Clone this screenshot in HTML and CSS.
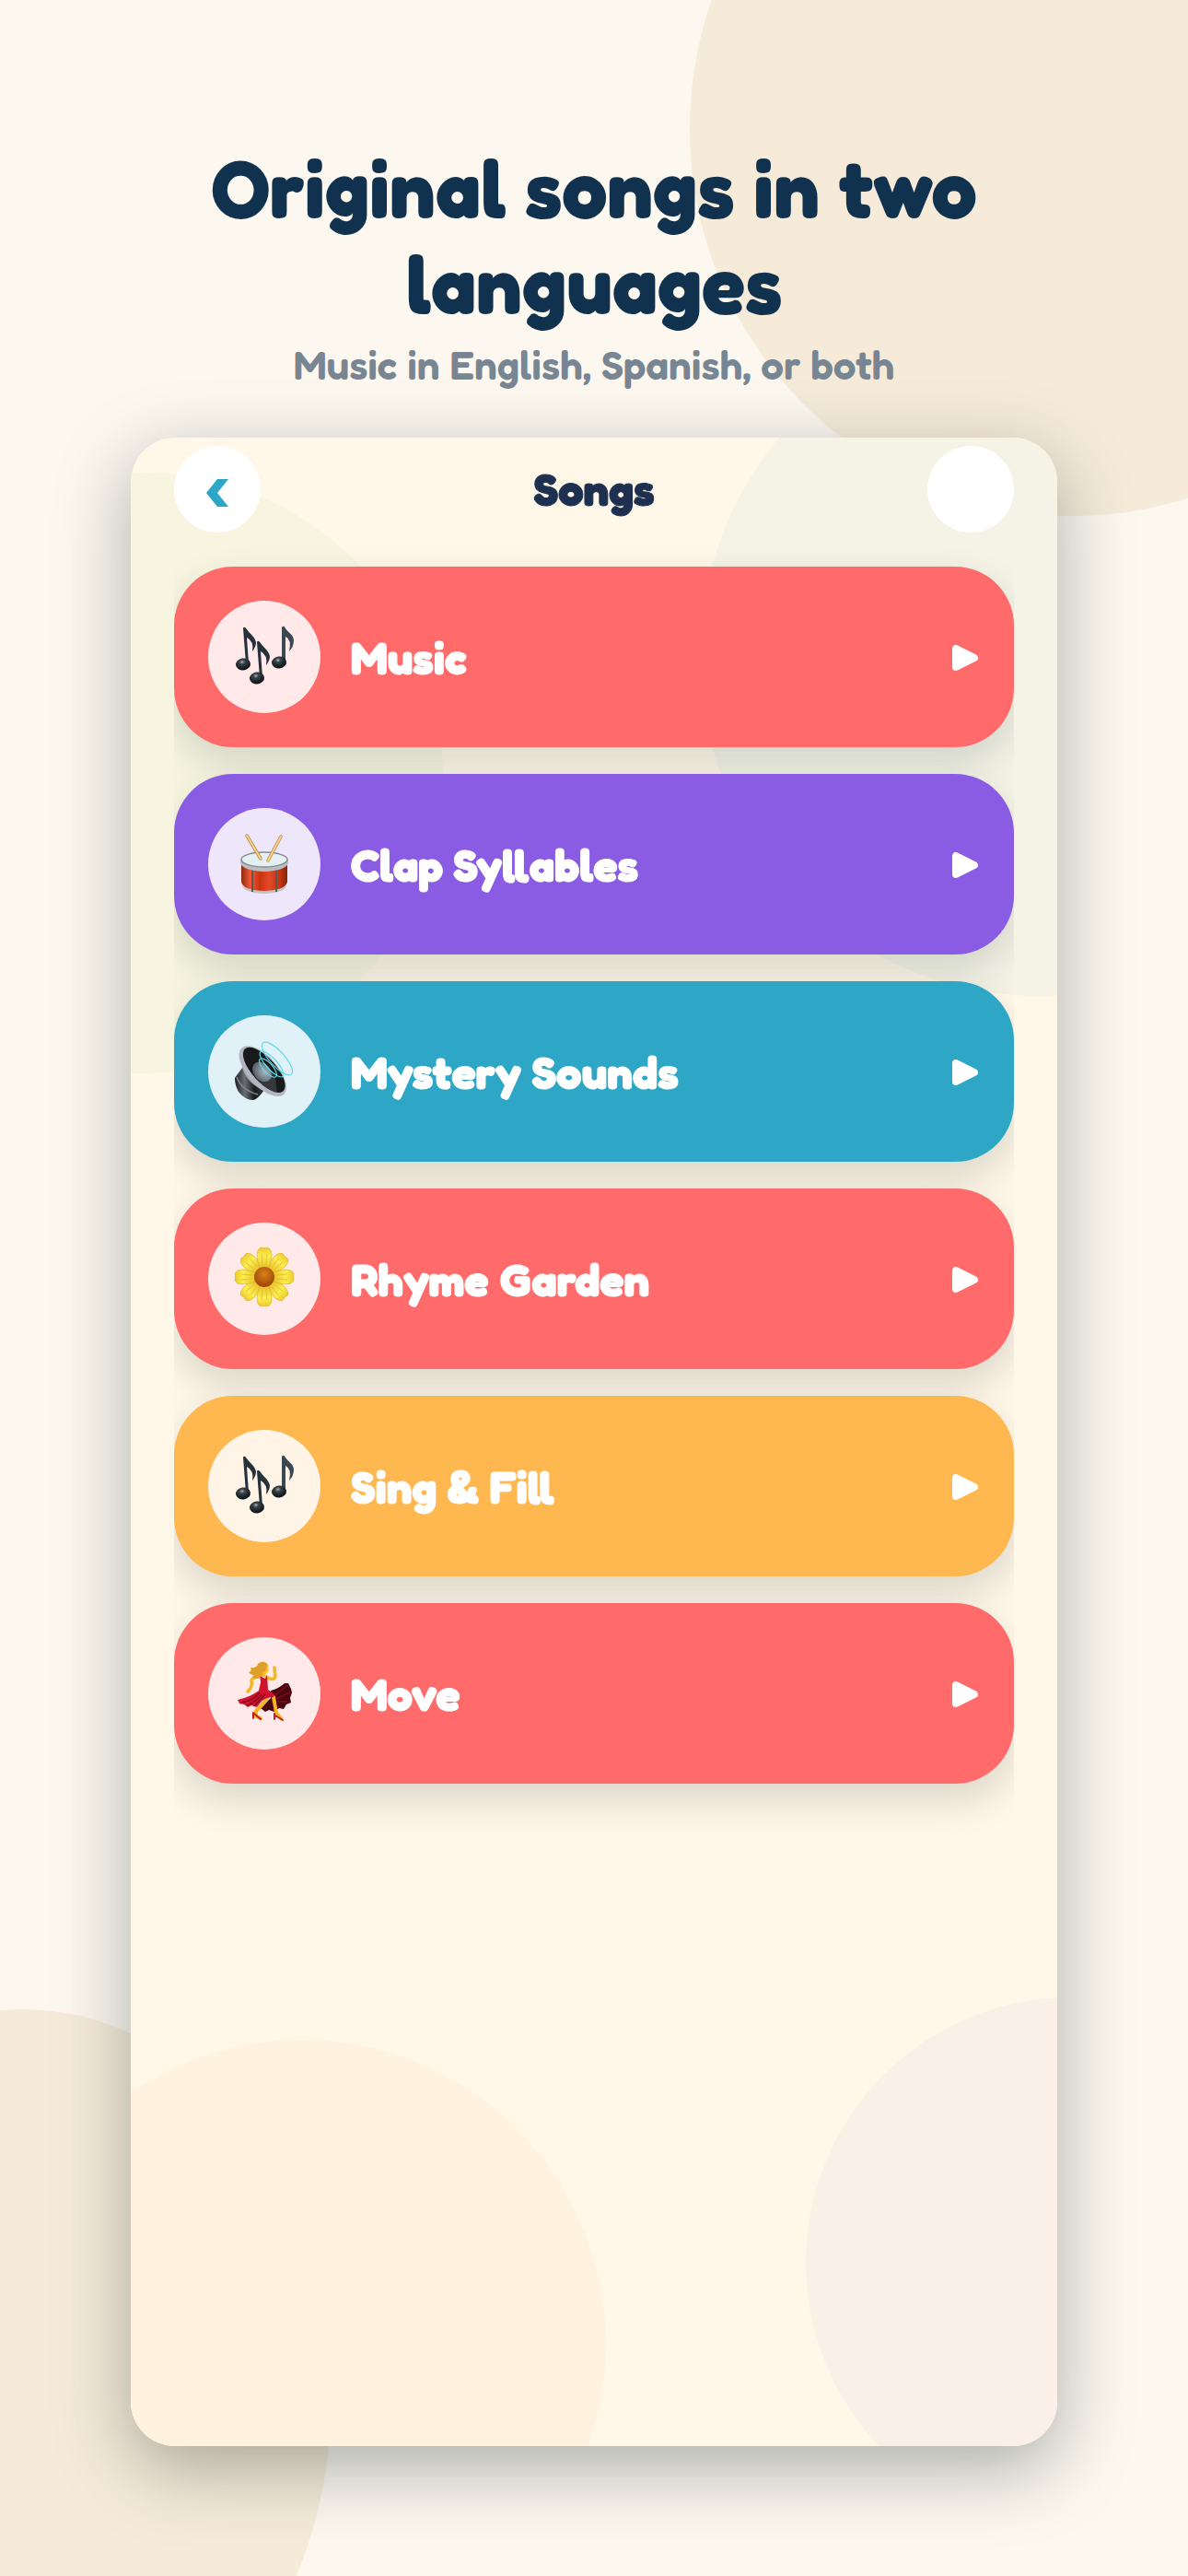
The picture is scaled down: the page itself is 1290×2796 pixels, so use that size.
FILE: index.html
```
<!DOCTYPE html>
<html lang="en">
<head>
    <meta charset="UTF-8">
    <meta name="viewport" content="width=device-width, initial-scale=1.0">
    <title>Songs</title>
    <link rel="stylesheet" href="styles.css">
</head>
<body>
    <div class="page">
        <div class="blob blob-top"></div>
        <div class="blob blob-bottom"></div>

        <header class="hero">
            <h1>Original songs in two languages</h1>
            <p>Music in English, Spanish, or both</p>
        </header>

        <main class="phone">
            <div class="blob blob-green"></div>
            <div class="blob blob-sage"></div>
            <div class="blob blob-orange"></div>
            <div class="blob blob-pink"></div>

            <div class="top-bar">
                <button class="round-btn" aria-label="Back">
                    <svg class="chevron" viewBox="0 0 24 30"><path d="M12 0h12L12 15l12 15H12L0 15z"/></svg>
                </button>
                <h2>Songs</h2>
                <span class="round-btn"></span>
            </div>

            <nav class="song-list">
                <button class="song red">
                    <span class="icon">
                        <svg viewBox="0 0 122 122">
                            <defs>
                                <radialGradient id="noteHead" cx="0.45" cy="0.3" r="0.6">
                                    <stop offset="0" stop-color="#a9b3b8"/>
                                    <stop offset="0.3" stop-color="#3a444b"/>
                                    <stop offset="1" stop-color="#10161b"/>
                                </radialGradient>
                                <g id="note">
                                    <path d="M0 -39Q1 -42 4 -38C7 -33 12 -31 14 -24Q14 -19 10 -14Q12 -25 4 -29L6 -1H3z" fill="#25313b"/>
                                    <ellipse rx="8" ry="6.500" transform="rotate(-8)" fill="url(#noteHead)"/>
                                </g>
                                <g id="notes">
                                    <use href="#note" x="38" y="69"/>
                                    <use href="#note" x="53" y="84"/>
                                    <g transform="translate(77 67)">
                                        <path d="M3 -38Q5 -41 7 -37C10 -32 16 -30 16 -24Q16 -17 11 -12Q14 -25 7 -28L7 -1H3z" fill="#3b4852"/>
                                        <ellipse rx="8" ry="6.500" transform="rotate(-8)" fill="url(#noteHead)"/>
                                    </g>
                                </g>
                            </defs>
                            <use href="#notes"/>
                        </svg>
                    </span>
                    <span class="label">Music</span>
                    <svg class="play" viewBox="0 0 29 28"><path d="M4 4v20l20-10z"/></svg>
                </button>
                <button class="song purple">
                    <span class="icon">
                        <svg viewBox="0 0 122 122">
                            <defs>
                                <linearGradient id="drumBody">
                                    <stop offset="0" stop-color="#8f2a10"/>
                                    <stop offset="0.2" stop-color="#f45a35"/>
                                    <stop offset="0.4" stop-color="#c9330e"/>
                                    <stop offset="0.6" stop-color="#e2492a"/>
                                    <stop offset="0.85" stop-color="#c2330f"/>
                                    <stop offset="1" stop-color="#7c240d"/>
                                </linearGradient>
                            </defs>
                            <path d="M36 58V80Q38 90 61 91Q84 90 86 80V58z" fill="url(#drumBody)"/>
                            <path d="M37 83Q40 89 61 90Q82 89 85 83V85Q82 92 61 93Q40 92 37 85z" fill="#c2c5c5"/>
                            <path d="M48 64V91M74 64V91" stroke="#5b5754" stroke-width="2"/>
                            <path d="M35 56V60Q38 68 61 69Q84 68 87 60V56z" fill="#b9bfc0"/>
                            <ellipse cx="61" cy="56" rx="25" ry="8" fill="#e4f0f3" stroke="#868c8e" stroke-width="1.500"/>
                            <path d="M42 30L57 55M79 31L65 57" stroke="#b98743" stroke-width="3.500" stroke-linecap="round"/>
                            <path d="M42 30L57 55M79 31L65 57" stroke="#f8d484" stroke-width="2" stroke-linecap="round"/>
                        </svg>
                    </span>
                    <span class="label">Clap Syllables</span>
                    <svg class="play" viewBox="0 0 29 28"><path d="M4 4v20l20-10z"/></svg>
                </button>
                <button class="song blue">
                    <span class="icon">
                        <svg viewBox="0 0 122 122">
                            <defs>
                                <linearGradient id="magnet">
                                    <stop offset="0" stop-color="#1c1f22"/>
                                    <stop offset="0.25" stop-color="#6a6f74"/>
                                    <stop offset="0.5" stop-color="#181a1c"/>
                                    <stop offset="1" stop-color="#55575a"/>
                                </linearGradient>
                                <radialGradient id="cone" cx="0.6" cy="0.4" r="0.7">
                                    <stop offset="0" stop-color="#a7b5c2"/>
                                    <stop offset="1" stop-color="#4b535b"/>
                                </radialGradient>
                            </defs>
                            <path d="M37 57L29 68Q29 76 33 83Q40 92 49 92Q54 91 61 81L72 80L40 48z" fill="url(#magnet)"/>
                            <path d="M31 67Q36 81 54 86" fill="none" stroke="#85888c" stroke-width="1.500"/>
                            <path d="M38 57Q43 73 61 81" fill="none" stroke="#a2a5a9" stroke-width="2"/>
                            <g transform="rotate(48 60 60)">
                                <ellipse cx="60" cy="61" rx="34" ry="16" fill="#b3b6c2"/>
                                <ellipse cx="60" cy="59" rx="31" ry="13" fill="#17191b"/>
                                <path d="M60 72Q80 71 87 65Q78 56 68 54z" fill="#35393c"/>
                                <ellipse cx="60" cy="62" rx="12" ry="9" fill="url(#cone)"/>
                            </g>
                            <g fill="none" stroke="#5edbe8" stroke-width="1.200">
                                <ellipse cx="75" cy="47" rx="23" ry="8" transform="rotate(48 75 47)"/>
                                <ellipse cx="69" cy="53" rx="18" ry="6" transform="rotate(48 69 53)"/>
                                <ellipse cx="65" cy="57" rx="13" ry="5" transform="rotate(48 65 57)"/>
                            </g>
                        </svg>
                    </span>
                    <span class="label">Mystery Sounds</span>
                    <svg class="play" viewBox="0 0 29 28"><path d="M4 4v20l20-10z"/></svg>
                </button>
                <button class="song red">
                    <span class="icon">
                        <svg viewBox="0 0 122 122">
                            <defs>
                                <linearGradient id="petalFill" x1="0" y1="0" x2="0" y2="1">
                                    <stop offset="0" stop-color="#eccb2c"/>
                                    <stop offset="0.4" stop-color="#fcee4e"/>
                                    <stop offset="1" stop-color="#e6bd2a"/>
                                </linearGradient>
                                <radialGradient id="flowerEye" cx="0.5" cy="0.35" r="0.6">
                                    <stop offset="0" stop-color="#d9801a"/>
                                    <stop offset="1" stop-color="#a04a06"/>
                                </radialGradient>
                                <g id="petal">
                                    <path d="M-5 -9Q-8 -18 -8 -24Q-8 -30 -4 -32Q0 -31 4 -32Q8 -30 8 -24Q8 -18 5 -9z" fill="url(#petalFill)" stroke="#d0a524" stroke-width="0.500"/>
                                    <path d="M-2 -13L-3 -25M2 -13L3 -25" stroke="#dcba30" stroke-width="0.800"/>
                                </g>
                            </defs>
                            <g transform="translate(61 59)">
                                <use href="#petal" transform="rotate(45)"/>
                                <use href="#petal" transform="rotate(135)"/>
                                <use href="#petal" transform="rotate(225)"/>
                                <use href="#petal" transform="rotate(315)"/>
                                <use href="#petal"/>
                                <use href="#petal" transform="rotate(90)"/>
                                <use href="#petal" transform="rotate(180)"/>
                                <use href="#petal" transform="rotate(270)"/>
                                <circle r="11" fill="url(#flowerEye)"/>
                            </g>
                        </svg>
                    </span>
                    <span class="label">Rhyme Garden</span>
                    <svg class="play" viewBox="0 0 29 28"><path d="M4 4v20l20-10z"/></svg>
                </button>
                <button class="song orange">
                    <span class="icon">
                        <svg viewBox="0 0 122 122"><use href="#notes"/></svg>
                    </span>
                    <span class="label">Sing &amp; Fill</span>
                    <svg class="play" viewBox="0 0 29 28"><path d="M4 4v20l20-10z"/></svg>
                </button>
                <button class="song red">
                    <span class="icon">
                        <svg viewBox="0 0 122 122">
                            <!-- back of the skirt -->
                            <path d="M68 58Q78 55 83 50L87 50L90 56L91 60L89 66L90 71L85 73L82 78L77 77L72 81L66 79L62 81L57 77L68 66z" fill="#4a0610"/>
                            <path d="M72 64L86 52M73 67L89 60M72 70L87 70M71 72L77 76" stroke="#7d0c1c" stroke-width="1.500"/>
                            <!-- legs -->
                            <path d="M64 66Q60 73 52 80L52 86L57 88M71 65L74 82L79 88" fill="none" stroke="#f2b722" stroke-width="4" stroke-linecap="round" stroke-linejoin="round"/>
                            <path d="M49 82V88M50 83L57 89M72 83V89M73 85L81 90" stroke="#c22025" stroke-width="2" stroke-linecap="round"/>
                            <!-- arms -->
                            <path d="M55 43Q47 44 47 47Q49 53 43 59M63 43Q71 48 73 43L72 33" fill="none" stroke="#f2b722" stroke-width="3.500" stroke-linecap="round" stroke-linejoin="round"/>
                            <!-- dress -->
                            <path d="M56 40L58 43L62 45L64 41L65 57L72 62L71 65Q61 65 56 72L53 76L47 74L43 76L39 73L34 72L32 68Q46 65 55 58L57 49z" fill="#d0122e"/>
                            <path d="M36 71Q49 69 56 60M43 74Q53 69 58 62M50 75Q56 68 62 62" fill="none" stroke="#860b1e" stroke-width="1.500"/>
                            <!-- head -->
                            <path d="M57 35L58 43L61 43L65 36z" fill="#f2b722"/>
                            <path d="M54 31Q56 26 62 27Q67 31 65 38Q59 42 57 36z" fill="#f6c433"/>
                            <path d="M63 29Q60 24 54 29Q53 34 46 33Q48 37 44 38Q46 41 49 41Q47 45 52 45Q59 44 59 38Q65 36 63 32L65 31Q63 26 57 27z" fill="#dfa02a"/>
                        </svg>
                    </span>
                    <span class="label">Move</span>
                    <svg class="play" viewBox="0 0 29 28"><path d="M4 4v20l20-10z"/></svg>
                </button>
            </nav>
        </main>
    </div>
</body>
</html>
```
FILE: styles.css
```
* {
    box-sizing: border-box;
}

body {
    margin: 0;
    font-family: Fredoka, Lato, 'Open Sans', sans-serif;
    background: #fcf7ef;
}

.page {
    position: relative;
    min-height: 100vh;
    padding: 152px 11% 141px;
    display: flex;
    flex-direction: column;
    overflow: hidden;
}

/* background circles */
.blob {
    position: absolute;
    border-radius: 50%;
}

.blob-top {
    width: 832px;
    height: 840px;
    top: -280px;
    right: -291px;
    background: #f6ebd9;
}

.blob-bottom {
    width: 670px;
    height: 840px;
    left: -310px;
    bottom: -225px;
    background: #f6ebd9;
}

.blob-green {
    width: 652px;
    height: 652px;
    top: 38px;
    left: -313px;
    background: #f7f5e0;
}

.blob-sage {
    width: 738px;
    height: 738px;
    top: -132px;
    right: -350px;
    background: #f4f3e5;
}

.blob-orange {
    width: 660px;
    height: 660px;
    left: -144px;
    bottom: -219px;
    background: #fff3df;
}

.blob-pink {
    width: 576px;
    height: 576px;
    right: -303px;
    bottom: -89px;
    background: #faf0e8;
}

/* heading */
.hero {
    position: relative;
    min-height: 323px;
    text-align: center;
}

.hero h1 {
    margin: 0 auto;
    max-width: 900px;
    font-size: 88px;
    line-height: 104px;
    font-weight: 900;
    color: #10324f;
}

.hero p {
    margin: 10px 0 0;
    font-size: 44px;
    line-height: 52px;
    font-weight: 600;
    color: #788592;
}

/* phone screen */
.phone {
    position: relative;
    flex: 1;
    padding: 9px 47px 60px;
    border-radius: 48px;
    background: #fff7e7;
    box-shadow: 0 24px 80px rgba(24, 44, 44, 0.36);
    overflow: hidden;
}

.top-bar {
    position: relative;
    display: flex;
    align-items: center;
    justify-content: space-between;
}

.top-bar h2 {
    margin: 0;
    font-size: 49px;
    line-height: 60px;
    font-weight: 900;
    color: #1e3050;
    -webkit-text-stroke: 1px #1e3050;
}

.round-btn {
    width: 94px;
    height: 94px;
    padding: 0;
    display: flex;
    align-items: center;
    justify-content: center;
    border: none;
    border-radius: 50%;
    background: #fff;
}

.chevron {
    width: 24px;
    height: 30px;
    margin-top: 8px;
    fill: #2ea7c7;
}

/* song buttons, shadows are cut at the list sides */
.song-list {
    position: relative;
    margin-top: 37px;
    display: flex;
    flex-direction: column;
    gap: 29px;
    overflow-x: clip;
}

.song {
    display: flex;
    align-items: center;
    gap: 33px;
    width: 100%;
    padding: 37px 38px 37px 37px;
    border: none;
    border-radius: 64px;
    box-shadow: 0 18px 42px rgba(30, 48, 60, 0.16);
    color: #fff;
    font-family: inherit;
    font-size: 49px;
    line-height: 60px;
    font-weight: 900;
    text-align: left;
    cursor: pointer;
}

.icon {
    width: 122px;
    height: 122px;
    border-radius: 50%;
    background: rgba(255, 255, 255, 0.85);
}

.icon svg {
    display: block;
}

.label {
    flex: 1;
    padding-top: 2px;
    -webkit-text-stroke: 1px #fff;
}

.play {
    width: 29px;
    height: 28px;
    margin-top: 2px;
    fill: #fff;
    stroke: #fff;
    stroke-width: 8px;
    stroke-linejoin: round;
}

.red {
    background: #ff6b6b;
}

.purple {
    background: #8a5ce4;
}

.blue {
    background: #2ea7c7;
}

.orange {
    background: #ffb74f;
}
```
